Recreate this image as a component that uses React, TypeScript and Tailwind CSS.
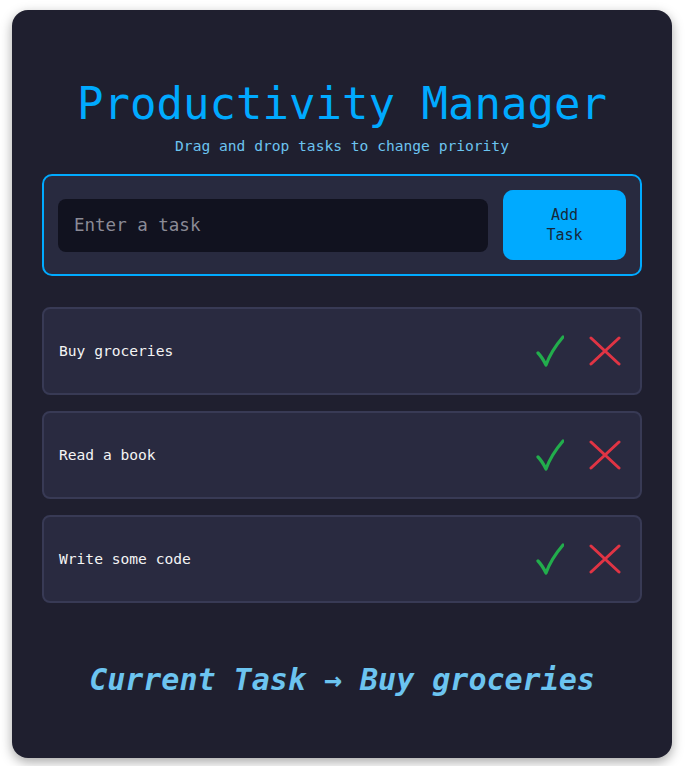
import { useState } from 'react'

const mono = { fontFamily: '"DejaVu Sans Mono", "Liberation Mono", monospace' }

function Check() {
  return (
    <svg width="28" height="32" viewBox="0 0 28 32" fill="none">
      <path d="M2 18 Q6 22 10 30 Q15 16 27 2" stroke="#22ad4c" strokeWidth="3.2" strokeLinecap="round" strokeLinejoin="round" />
    </svg>
  )
}

function Cross() {
  return (
    <svg width="32" height="30" viewBox="0 0 32 30" fill="none">
      <path d="M2 2 L30 28 M30 2 L2 28" stroke="#e03444" strokeWidth="3" strokeLinecap="round" />
    </svg>
  )
}

export default function App() {
  const [tasks] = useState(['Buy groceries', 'Read a book', 'Write some code'])

  return (
    <div className="min-h-screen bg-white pt-[10px] pl-[12px]" style={mono}>
      <div className="w-[660px] h-[748px] rounded-2xl bg-[#1f1f2f] shadow-[0_4px_12px_rgba(0,0,0,0.35)] px-[30px] pt-[70px]">
        {/* Header */}
        <h1 className="text-center text-[44px] leading-[48px] text-[#00aaff]">Productivity Manager</h1>
        <p className="mt-[8px] text-center text-[14.6px] leading-[20px] text-[#6cc4f0]">
          Drag and drop tasks to change priority
        </p>

        {/* Input */}
        <div className="mt-[18px] flex items-center gap-[15px] rounded-[10px] border-2 border-[#00aaff] bg-[#282a3f] p-[14px]">
          <input
            className="h-[53px] flex-1 rounded-[8px] bg-[#11121f] pl-[16px] text-[17.5px] text-white outline-none placeholder:text-[#8b8b96]"
            placeholder="Enter a task"
            style={mono}
          />
          <button className="h-[70px] w-[123px] rounded-[10px] bg-[#00aaff] text-[15px] leading-[20px] text-[#16283a]" style={mono}>
            Add<br />Task
          </button>
        </div>

        {/* Tasks */}
        <div className="mt-[31px] flex flex-col gap-[16px]">
          {tasks.map(t => (
            <div key={t} className="flex h-[88px] items-center rounded-[8px] border-2 border-[#383a55] bg-[#292a40] pl-[15px] pr-[19px]">
              <span className="flex-1 text-[14.6px] text-[#f4f4f4]">{t}</span>
              <div className="flex items-center gap-[25px]">
                <Check />
                <Cross />
              </div>
            </div>
          ))}
        </div>

        {/* Current */}
        <p className="mt-[57px] text-center text-[30px] italic leading-[40px] font-bold text-[#6cc4f0]">
          Current Task → Buy groceries
        </p>
      </div>
    </div>
  )
}
